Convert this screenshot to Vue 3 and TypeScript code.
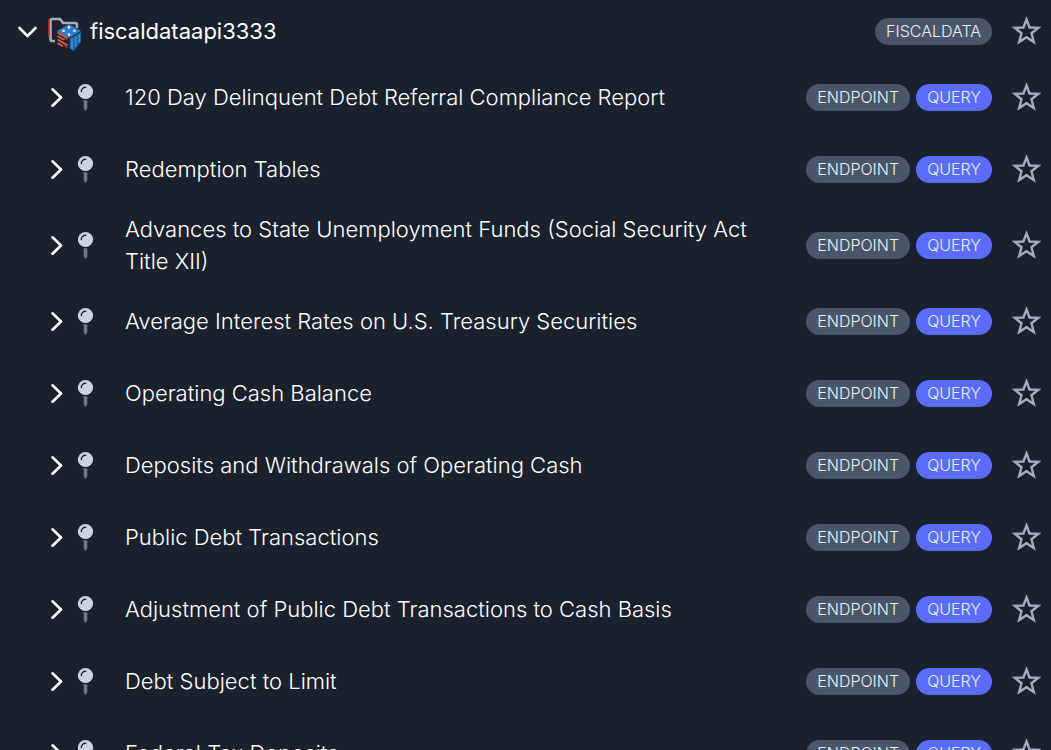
<script setup lang="ts">
interface Endpoint {
  id: number
  title: string
}

const source = 'fiscaldataapi3333'

const endpoints: Endpoint[] = [
  '120 Day Delinquent Debt Referral Compliance Report',
  'Redemption Tables',
  'Advances to State Unemployment Funds (Social Security Act Title XII)',
  'Average Interest Rates on U.S. Treasury Securities',
  'Operating Cash Balance',
  'Deposits and Withdrawals of Operating Cash',
  'Public Debt Transactions',
  'Adjustment of Public Debt Transactions to Cash Basis',
  'Debt Subject to Limit',
  'Federal Tax Deposits',
].map((title, id) => ({ id, title }))
</script>

<template>
  <main class="panel">
    <header class="source">
      <button class="toggle" type="button" aria-label="Collapse source" aria-expanded="true">
        <svg width="20" height="18" viewBox="0 0 20 18" aria-hidden="true">
          <path class="chevron" d="M2.5 6 L10.5 14 L18.5 6" />
        </svg>
      </button>
      <svg class="folder" width="34" height="40" viewBox="0 0 34 40" aria-hidden="true">
        <path class="folder-line" d="M7 30 H4 Q2.5 30 2.5 28.5 V9.5 Q2.5 8 4 8 H12 L15 12 H27 Q29 12 29 14 V17" />
        <path class="folder-edge" d="M1 8 V26" />
        <path fill="#2f7fc8" d="M21 13 L33 20 L21 27 L9 20 Z" />
        <path fill="#1c5fa3" d="M21.5 27.5 L33 21 V31 L31 32 V35 L29 34 V38 L27 36 V39 L25 40 L21.5 37 Z" />
        <path stroke="#3b92dc" stroke-width="1.6" d="M24 27.5 V38 M27.7 25.5 V35.5 M31.3 23.5 V32" />
        <path stroke="#e2604c" stroke-width="1.8" d="M9.5 21.5 L19.5 27.2 M9.5 25 L16.5 29 M9.5 28.5 L19.5 34.2 M9.5 32 L15 35.2" />
        <path stroke="#a83a38" stroke-width="1.2" d="M17 27 L19.8 29.5 M16 34.5 L19.8 36.8" />
        <g fill="#e7f3ff">
          <circle cx="21" cy="16.4" r="1.3" />
          <circle cx="15.5" cy="19.8" r="1.3" />
          <circle cx="26.5" cy="19.8" r="1.3" />
          <circle cx="21" cy="23.6" r="1.3" />
        </g>
      </svg>
      <h1 class="source-title">{{ source }}</h1>
      <span class="badge">FISCALDATA</span>
      <button class="star" type="button" aria-label="Favorite source">
        <svg width="30" height="30" viewBox="0 0 30 30" aria-hidden="true">
          <path class="star-line" d="M15.5 3.5 L18.6 11.5 L27.2 11.9 L20.5 17.3 L22.8 26 L15.5 21.2 L8.2 26 L10.5 17.3 L3.8 11.9 L12.4 11.5 Z" />
        </svg>
      </button>
    </header>

    <ul class="list">
      <li v-for="item in endpoints" :key="item.id" class="row">
        <button class="toggle" type="button" :aria-label="`Expand ${item.title}`" aria-expanded="false">
          <svg width="14" height="20" viewBox="0 0 14 20" aria-hidden="true">
            <path class="chevron" d="M2.5 2.3 L11 10.5 L2.5 18.7" />
          </svg>
        </button>
        <svg class="pin" width="16" height="28" viewBox="0 0 16 28" aria-hidden="true">
          <path fill="#717986" d="M5.7 17.3 H9.3 V25 L8 27.5 H7 L5.7 25 Z" />
          <circle cx="7.5" cy="8.5" r="7.6" fill="#cbd5e0" />
          <path class="glint" d="M3.3 8.5 A4.4 4.4 0 0 1 7.7 4.2" />
        </svg>
        <span class="title">{{ item.title }}</span>
        <span class="badge">ENDPOINT</span>
        <button class="badge query" type="button">QUERY</button>
        <button class="star" type="button" :aria-label="`Favorite ${item.title}`">
          <svg width="30" height="30" viewBox="0 0 30 30" aria-hidden="true">
            <path class="star-line" d="M15.5 3.5 L18.6 11.5 L27.2 11.9 L20.5 17.3 L22.8 26 L15.5 21.2 L8.2 26 L10.5 17.3 L3.8 11.9 L12.4 11.5 Z" />
          </svg>
        </button>
      </li>
    </ul>
  </main>
</template>

<style>
body {
  margin: 0;
  background: #1a202c;
}
</style>

<style scoped>
.panel {
  height: 100vh;
  overflow: hidden;
  background: #1a202c;
  color: #ffffff;
  font-family: Inter, "Liberation Sans", sans-serif;
  font-size: 22px;
  font-weight: 300;
  line-height: 32px;
}

button {
  border: 0;
  background: none;
  font-family: inherit;
  color: inherit;
  cursor: pointer;
}

svg {
  display: block;
  fill: none;
}

.source {
  display: flex;
  align-items: center;
  box-sizing: border-box;
  height: 61px;
  padding: 1px 10px 0 17px;
}

.source-title {
  flex: 1;
  margin: 0 0 0 8px;
  font-size: 22px;
  font-weight: 400;
}

.folder {
  flex: none;
  margin-left: 11px;
}

.list {
  margin: 0;
  padding: 0;
  list-style: none;
}

.row {
  display: flex;
  align-items: center;
  min-height: 56px;
  padding: 8px 10px 8px 50px;
}

.toggle {
  flex: none;
  padding: 0;
}

.chevron {
  stroke: #ffffff;
  stroke-width: 2.6;
  stroke-linecap: round;
  stroke-linejoin: round;
}

.folder-line {
  stroke: #a0aec0;
  stroke-width: 2.6;
}

.folder-edge {
  stroke: #f51b1b;
  stroke-width: 1.6;
}

.pin {
  flex: none;
  margin-left: 14px;
}

.glint {
  stroke: #1a202c;
  stroke-width: 1.4;
  stroke-linecap: round;
}

.title {
  flex: 1;
  margin: 0 32px 0 31px;
}

.badge {
  flex: none;
  padding: 0 11px;
  border-radius: 14px;
  background: #4a5568;
  color: #edf2f7;
  font-size: 16px;
  font-weight: 300;
  line-height: 27px;
}

.query {
  margin-left: 6px;
  background: #5a6cff;
}

.star {
  flex: none;
  margin-left: 19px;
  padding: 0;
}

.star-line {
  stroke: #a0aec0;
  stroke-width: 2.4;
}
</style>
